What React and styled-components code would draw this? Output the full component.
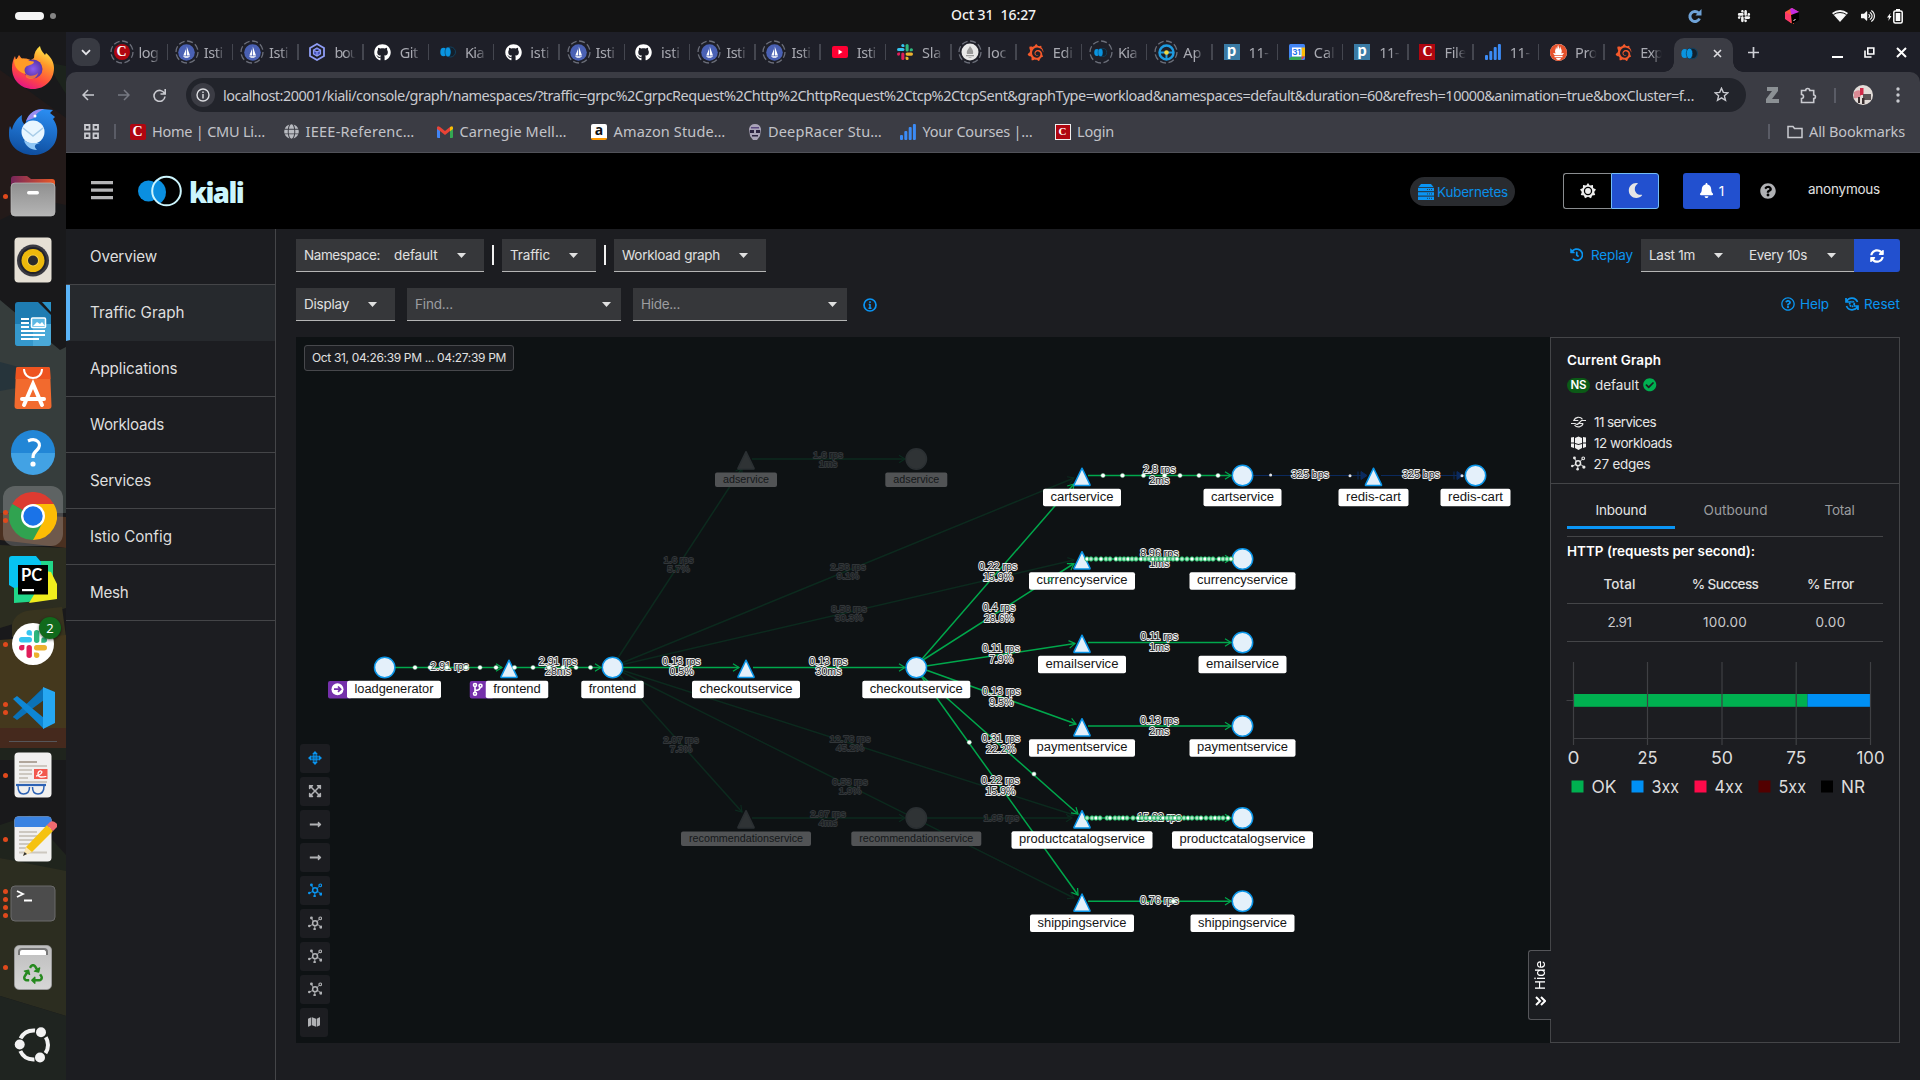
import React, { useLayoutEffect, useRef, useState } from "react";
import styled, { createGlobalStyle } from "styled-components";
import {
  FaGithub, FaSlack, FaBell, FaMoon, FaQuestionCircle, FaRegQuestionCircle, FaHistory,
  FaSyncAlt, FaCheckCircle, FaMap, FaLongArrowAltRight, FaExpandArrowsAlt,
  FaRecycle, FaVolumeUp, FaGlobe,
} from "react-icons/fa";
import { SiGrafana, SiPrometheus } from "react-icons/si";

const UI = `Inter, "Open Sans", sans-serif`;
const CHROME = `"Noto Sans", "Open Sans", sans-serif`;
const line = "#444548";

const Global = createGlobalStyle`
  * { box-sizing: border-box; }
  body { margin: 0; background: #1b1d21; overflow: hidden; }
  svg { display: block; flex: none; }
`;

/* Text tracked to a fixed measure */
const Measure = styled.span`
  display: inline-block;
  white-space: pre;
  flex: none;
`;
function T({ w, children, ...rest }) {
  const ref = useRef(null);
  const [ls, setLs] = useState(0);
  useLayoutEffect(() => {
    const natural = ref.current.getBoundingClientRect().width;
    setLs((w - natural) / children.length);
  }, []);
  return <Measure ref={ref} style={{ letterSpacing: `${ls}px` }} {...rest}>{children}</Measure>;
}

const Desktop = styled.div`
  width: 1920px;
  height: 1080px;
  display: grid;
  grid-template-rows: 32px 1fr;
  grid-template-columns: minmax(0, 1fr);
  background: #1b1d21;
`;
const TopBar = styled.div`
  display: grid;
  grid-template-columns: 951px 1fr auto;
  align-items: center;
  background: #131313;
  color: #f2f2f2;
  font: 500 14px/20px ${CHROME};
`;
const Pills = styled.div`
  display: flex;
  align-items: center;
  gap: 6px;
  padding-left: 15px;
`;
const Pill = styled.i`
  width: ${(p) => p.$w}px;
  height: ${(p) => p.$h}px;
  border-radius: 5px;
  background: ${(p) => p.$c};
`;
const Clock = styled.div`padding-bottom: 2px;`;
const Tray = styled.div`
  display: flex;
  align-items: center;
  width: 234px;
`;
const TrayIcon = styled.span`
  width: ${(p) => p.$w}px;
  display: flex;
  justify-content: center;
`;
const Main = styled.div`
  display: grid;
  grid-template-columns: 66px minmax(0, 1fr);
  height: 1048px;
`;

/* ---------- dock ---------- */
const DockBox = styled.div`
  position: relative;
  height: 1048px;
  overflow: hidden;
`;
const Wallpaper = styled.svg`
  position: absolute;
  inset: 0;
`;
const DockList = styled.div`
  position: relative;
  display: flex;
  flex-direction: column;
  height: 1048px;
  padding: 4px 0 3px;
`;
const DockItem = styled.div`
  position: relative;
  height: 64px;
  display: flex;
  align-items: center;
  justify-content: center;
  margin-top: ${(p) => (p.$last ? "auto" : 0)};
`;
const DockActive = styled.div`
  width: 60px;
  height: 60px;
  border-radius: 12px;
  display: grid;
  place-items: center;
  background: rgba(255, 255, 255, 0.2);
`;
const Dots = styled.div`
  position: absolute;
  left: 3px;
  top: 0;
  bottom: 0;
  display: flex;
  flex-direction: column;
  justify-content: center;
  gap: 3px;
`;
const Dot = styled.i`
  width: 5px;
  height: 5px;
  border-radius: 50%;
  background: #e0491c;
`;
const DockRule = styled.div`
  height: 1px;
  margin: 1px 9px 1px;
  background: #56565a;
`;
const Badge = styled.b`
  position: absolute;
  left: 39px;
  top: 5px;
  width: 22px;
  height: 22px;
  border-radius: 50%;
  background: #116a1c;
  color: #fff;
  font: 400 13px/22px ${CHROME};
  text-align: center;
  box-shadow: 0 1px 3px #0009;
`;

const Firefox = () => (
  <svg width="44" height="44" viewBox="0 0 44 44">
    <defs>
      <linearGradient id="ff1" x1="0.8" y1="0" x2="0.3" y2="1"><stop offset="0" stopColor="#fff44f" /><stop offset=".35" stopColor="#ff9a2a" /><stop offset=".7" stopColor="#ff4a3f" /><stop offset="1" stopColor="#e3128a" /></linearGradient>
      <radialGradient id="ff2"><stop offset="0" stopColor="#8a5cf0" /><stop offset="1" stopColor="#5b34a8" /></radialGradient>
    </defs>
    <path d="M22 43C10 43 1 34 1 22c0-5 1-8 3-12l1 4 3-5 3 4c3-1 6 0 9 1l3-2c0-5 2-9 6-12 1 5 3 6 5 9l1-2c5 4 8 9 8 15 0 12-9 21-21 21z" fill="url(#ff1)" />
    <circle cx="22" cy="23" r="9.5" fill="url(#ff2)" />
    <path d="M3 14c5-3 11-2 15 1 0 0 5 0 5 1-1 3-5 3-7 4-3 2-3 5-1 8-6-1-12-6-12-14z" fill="#ff9b26" />
    <path d="M15 28c4 3 9 2 12-1-1 6-8 8-12 4z" fill="#ff7a30" opacity=".8" />
  </svg>
);
const Thunderbird = () => (
  <svg width="50" height="48" viewBox="0 0 50 48">
    <defs><linearGradient id="tb" x1=".6" y1="0" x2=".4" y2="1"><stop offset="0" stopColor="#2a8cf0" /><stop offset="1" stopColor="#0e4d9e" /></linearGradient></defs>
    <path d="M25 47C12 47 1 38 1 27c0-4 0-7 1-9l2 4c1-6 5-12 10-15-1 5 1 8 3 10C19 7 25 1 35 1l10 1-3 3 5 4-2 2c3 4 5 9 4 16-1 12-11 20-24 20z" fill="url(#tb)" />
    <path d="M18 13c3-8 9-12 18-12-5 2-8 5-10 9z" fill="#9a8cf0" />
    <circle cx="25" cy="24" r="11.500" fill="#e9f6ff" />
    <path d="M15 20l10 8 10-8" fill="none" stroke="#a9cde8" strokeWidth="1.600" />
    <path d="M16 32c4 4 10 3 16 3-5 1-7 3-3 7-6 0-12-4-13-10z" fill="#8fc6f5" />
    <circle cx="27" cy="8" r="1.500" fill="#fff" />
  </svg>
);
const Files = () => (
  <svg width="46" height="42" viewBox="0 0 46 42">
    <defs><linearGradient id="fi1"><stop offset="0" stopColor="#77265a" /><stop offset="1" stopColor="#ea5a26" /></linearGradient><linearGradient id="fi2" x2="0" y2="1"><stop offset="0" stopColor="#8f8f8f" /><stop offset="1" stopColor="#b5b5b5" /></linearGradient></defs>
    <path d="M1 30V4q0-3 3-3h13l4 3h21q3 0 3 3v20z" fill="url(#fi1)" />
    <rect x="1" y="8" width="44" height="33" rx="4" fill="url(#fi2)" stroke="#bbb" strokeWidth=".7" />
    <rect x="17" y="16" width="12" height="3.4" rx="1.7" fill="#fff" />
  </svg>
);
const Rhythmbox = () => (
  <svg width="38" height="46" viewBox="0 0 38 46">
    <rect x=".5" y=".5" width="37" height="45" rx="4" fill="#e6e0d5" />
    <circle cx="19" cy="23.500" r="16" fill="#3a3a42" /><circle cx="19" cy="23.500" r="13.500" fill="#23232a" />
    <circle cx="19" cy="23.500" r="11.500" fill="#edb90c" /><circle cx="19" cy="23.500" r="6" fill="#f6cf3e" /><circle cx="19" cy="23.500" r="5" fill="#2b2b2b" />
  </svg>
);
const Writer = () => (
  <svg width="38" height="46" viewBox="0 0 38 46">
    <path d="M4 1h20l13 13v28q0 3-3 3H4q-3 0-3-3V4q0-3 3-3z" fill="#1e7cb2" />
    <path d="M1 23h18v22H4q-3 0-3-3z" fill="#3598cc" /><path d="M19 23h18v19q0 3-3 3H19z" fill="#4aa9d8" />
    <path d="M28 1h9v10z" fill="#2a93c9" />
    <path d="M7 18h8M7 22h8M7 26h8M7 30h24M7 34h24M7 38h18" stroke="#fff" strokeWidth="2" />
    <rect x="17.500" y="17" width="14" height="9.500" rx="1" fill="#5db8e4" stroke="#fff" strokeWidth="1.500" /><path d="M19 25l4-4 3 2 2-2 3 4z" fill="#fff" />
  </svg>
);
const Software = () => (
  <svg width="38" height="44" viewBox="0 0 38 44">
    <path d="M4 1h30q2 0 2 2l1.500 37q0 3-3 3h-31q-3 0-3-3L2 3q0-2 2-2z" fill="#f26a2e" /><path d="M4 1h30q2 0 2 2l.5 10h-35L2 3q0-2 2-2z" fill="#ee5420" />
    <path d="M10 3c0 12 18 12 18 0" fill="none" stroke="#fff" strokeWidth="2" />
    <path d="M10 39l9-21 9 21M8 33h22" fill="none" stroke="#fff" strokeWidth="4" strokeLinecap="round" />
  </svg>
);
const Help = () => (
  <svg width="46" height="46" viewBox="0 0 46 46">
    <circle cx="23" cy="23" r="22" fill="#2286d6" /><path d="M1 24h44a22 22 0 0 1-44 0z" fill="#42a2e4" />
    <path d="M18 12c9-4 15 3 9 9-3 3-4 4-4 8" fill="none" stroke="#fff" strokeWidth="3.200" /><circle cx="23" cy="35" r="2.600" fill="#fff" />
  </svg>
);
const Chrome = () => (
  <svg width="48" height="48" viewBox="0 0 48 48">
    <path d="M24 24L3.200 12A24 24 0 0 1 44.800 12z" fill="#dd3b30" /><path d="M24 24l20.800-12A24 24 0 0 1 24 48z" fill="#fcbc05" />
    <path d="M24 24l-20.800-12A24 24 0 0 0 24 48l10-18z" fill="#30a350" /><path d="M24 12h20.800l-10.400 18z" fill="#fcbc05" />
    <circle cx="24" cy="24" r="12" fill="#fff" /><circle cx="24" cy="24" r="9.700" fill="#1a73e8" />
  </svg>
);
const DockText = styled.text`
  font: 700 16.5px Lato, sans-serif;
`;
const PyCharm = () => (
  <svg width="48" height="48" viewBox="0 0 48 48">
    <path d="M5 32V47l26-2 13-12V5H24z" fill="#21d789" /><path d="M0 3q0-3 3-3h24l5 6v20L5 32l-5-3z" fill="#07c3f2" />
    <path d="M32 14l10 2 6 12v15L20 47l12-20z" fill="#f1ed1d" />
    <rect x="9" y="9" width="30" height="29.500" />
    <DockText x="12" y="24.500" fill="#fff">PC</DockText>
    <rect x="13" y="33" width="12" height="2.200" fill="#fff" />
  </svg>
);
const SlackMark = ({ size }) => (
  <svg width={size} height={size} viewBox="0 0 28 28">
    <g fill="#36c5f0"><rect x="0" y="7" width="13" height="5.400" rx="2.700" /><path d="M7.500 2.700a2.700 2.700 0 0 1 5.400 0v2.700h-2.700a2.700 2.700 0 0 1-2.700-2.700z" /></g>
    <g fill="#2eb67d"><rect x="15" y="0" width="5.400" height="13" rx="2.700" /><path d="M25.300 7.300a2.700 2.700 0 0 1 0 5.400h-3V10a2.700 2.700 0 0 1 3-2.700z" /></g>
    <g fill="#ecb22e"><rect x="15" y="15" width="13" height="5.400" rx="2.700" /><path d="M15 22.500h2.700a2.700 2.700 0 1 1-2.700 2.700z" /></g>
    <g fill="#e01e5a"><rect x="7.500" y="15" width="5.400" height="13" rx="2.700" /><path d="M2.700 15h2.700v2.700A2.700 2.700 0 1 1 2.700 15z" /></g>
  </svg>
);
const SlackDisc = styled.div`
  width: 42px;
  height: 42px;
  border-radius: 50%;
  background: #fff;
  display: grid;
  place-items: center;
`;
const VSCode = () => (
  <svg width="43" height="42" viewBox="0 0 43 42">
    <path d="M1 30l30-29v10L5 32z" fill="#0a6cb0" /><path d="M1 30l4 3 27-20V1z" fill="#0b72b8" /><path d="M1 12l4-3 27 22v11z" fill="#0e86d4" /><path d="M31 0l12 5v31l-12 6z" fill="#26a7f2" />
  </svg>
);
const Reader = () => (
  <svg width="38" height="46" viewBox="0 0 38 46">
    <rect x=".5" y=".5" width="37" height="45" rx="4" fill="#f1f0ef" />
    <path d="M5 10h18" stroke="#b1a79c" strokeWidth="2" /><path d="M5 14h28M5 18h13M5 22h13M5 26h9M5 30h28" stroke="#cdc8c0" strokeWidth="2" />
    <rect x="20" y="17" width="13.500" height="10" fill="#f2584e" /><path d="M22 24c3 0 8-4 5-5s-5 6 0 6 5-1 5-1" stroke="#fff" fill="none" strokeWidth="1.300" />
    <path d="M2 33h30" fill="none" stroke="#2d62b4" strokeWidth="2.200" /><path d="M4 34c0 6 2 8 5.500 8s6-2 6-7M18.500 35c0 5 2 7 5.500 7s6-2 6-8" fill="none" stroke="#2d62b4" strokeWidth="1.500" />
  </svg>
);
const Editor = () => (
  <svg width="48" height="46" viewBox="0 0 48 46">
    <rect x="5.500" y=".5" width="37" height="45" rx="4" fill="#f1f0ef" /><path d="M5.500 11V4.500q0-4 4-4h29q4 0 4 4V11z" fill="#3a83e2" />
    <path d="M10 16h18M10 20h20M10 24h16M10 28h14M10 32h8M10 36.500h28" stroke="#cdc8c0" strokeWidth="1.800" />
    <path d="M15 39l2-8L38 9l6 6-21 21z" fill="#f5c211" /><path d="M38 9l3-3q3-2 6 1t0 5l-3 3z" fill="#f06a70" /><path d="M14 40l3-9 6 5z" fill="#fbe6b4" /><path d="M14 40l1.500-4 2.500 2z" fill="#333" />
  </svg>
);
const Terminal = () => (
  <svg width="46" height="37" viewBox="0 0 46 37">
    <rect x="1" y="1" width="44" height="35" rx="4" fill="#4c4c4c" stroke="#6a6a6a" />
    <path d="M7 6l6 3-6 3M14 15.500h8" fill="none" stroke="#fff" strokeWidth="1.800" />
  </svg>
);
const TrashBox = styled.div`
  width: 38px;
  height: 45px;
  border-radius: 5px;
  background: linear-gradient(#bdbdbd, #d6d6d6);
  border: 1px solid #999;
  display: flex;
  flex-direction: column;
  align-items: center;
  gap: 9px;
  color: #26891f;
`;
const Paper = styled.i`
  width: 30px;
  height: 7px;
  margin-top: 2px;
  border: 2px solid #777;
  border-bottom: 0;
  border-radius: 4px 4px 0 0;
  background: #fff;
`;
const Ubuntu = () => (
  <svg width="38" height="38" viewBox="0 0 38 38">
    <circle cx="19.500" cy="19" r="14.500" fill="none" stroke="#f2f2f2" strokeWidth="4" strokeDasharray="17.400 12.970" strokeDashoffset="8.700" />
    <g fill="#f2f2f2"><circle cx="5.700" cy="18.500" r="5" /><circle cx="27" cy="6.300" r="5" /><circle cx="26" cy="31.500" r="5" /></g>
  </svg>
);

const dock = [
  [<Firefox />, 0], [<Thunderbird />, 0], [<Files />, 1], [<Rhythmbox />, 0], [<Writer />, 0], [<Software />, 0], [<Help />, 0],
  [<DockActive><Chrome /></DockActive>, 2], [<PyCharm />, 0],
  [<><SlackDisc><SlackMark size={28} /></SlackDisc><Badge>2</Badge></>, 1], [<VSCode />, 2],
];
const dock2 = [[<Reader />, 1], [<Editor />, 1], [<Terminal />, 4], [<TrashBox><Paper /><FaRecycle size={20} /></TrashBox>, 1]];

const DockEntry = ({ item }) => (
  <DockItem>
    <Dots>{Array.from({ length: item[1] }, (_, i) => <Dot key={i} />)}</Dots>
    {item[0]}
  </DockItem>
);

function Dock() {
  return (
    <DockBox>
      <Wallpaper width="66" height="1048" viewBox="0 32 66 1048">
        <rect y="32" width="66" height="1048" fill="#19191b" />
        <path d="M0 70L66 118V205L40 200 0 220z" fill="#231a19" /><path d="M46 62l20 4v28z" fill="#1c231c" />
        <path d="M0 300L60 350l6-3V513H0z" fill="#363d3c" /><path d="M0 362l30 8-14 18-16 3z" fill="#26343b" />
        <path d="M0 513l66 4v31L0 540z" fill="#4a3020" /><path d="M0 545l66 3v60L0 628z" fill="#2c2d20" />
        <path d="M12 625q3-14 22-15l28-3 4 30H12z" fill="#38341f" /><path d="M0 640l66-5v93H0z" fill="#44381d" />
        <path d="M0 728h66v20H0z" fill="#45291d" /><path d="M0 748h66v12H0z" fill="#1f241d" />
        <path d="M0 825l30-10 36 40v20L0 858z" fill="#1f241d" /><path d="M0 858l66 13v145L0 996z" fill="#2c2d20" />
        <path d="M0 996l66 20v64H0z" fill="#1f2420" />
      </Wallpaper>
      <DockList>
        {dock.map((d, i) => <DockEntry item={d} key={i} />)}
        <DockRule />
        {dock2.map((d, i) => <DockEntry item={d} key={i} />)}
        <DockItem $last><Ubuntu /></DockItem>
      </DockList>
    </DockBox>
  );
}

/* ---------- browser chrome ---------- */
const Browser = styled.div`
  display: flex;
  flex-direction: column;
  min-width: 0;
  background: #1c1d21;
`;
const TabStrip = styled.div`
  height: 40px;
  flex: none;
  display: flex;
  align-items: center;
  background: #1e1f28;
  color: #a9aab2;
  font: 400 14.5px/22px ${CHROME};
`;
const TabSearch = styled.div`
  width: 28px;
  height: 28px;
  margin: 0 4px 0 6px;
  border-radius: 9px;
  background: #383a42;
  display: grid;
  place-items: center;
  flex: none;
`;
const Tab = styled.div`
  width: 65.3px;
  height: 40px;
  display: flex;
  align-items: center;
  gap: 5px;
  padding-left: 5.5px;
  flex: none;
`;
const TabSep = styled.i`
  width: 1.5px;
  height: 16px;
  background: #44464f;
`;
const Fav = styled.span`
  width: 24px;
  height: 24px;
  display: grid;
  place-items: center;
  flex: none;
  & > * { grid-area: 1 / 1; }
`;
const TabTitle = styled.span`
  width: 23px;
  flex: none;
  padding-bottom: 1px;
  -webkit-mask-image: linear-gradient(90deg, #000 50%, transparent 95%);
  mask-image: linear-gradient(90deg, #000 50%, transparent 95%);
`;
const ActiveTab = styled.div`
  position: relative;
  width: 59px;
  height: 34px;
  margin: 6px 0 0 3px;
  border-radius: 10px 10px 0 0;
  background: #3b3c44;
  display: flex;
  align-items: center;
  gap: 15px;
  padding: 0 0 4px 7px;
  flex: none;
  &::before, &::after {
    content: "";
    position: absolute;
    bottom: 0;
    width: 10px;
    height: 10px;
    background: radial-gradient(circle at 0 0, transparent 9.5px, #3b3c44 10px);
    left: -10px;
  }
  &::after { left: 59px; background: radial-gradient(circle at 100% 0, transparent 9.5px, #3b3c44 10px); }
`;
const WinButtons = styled.div`
  display: flex;
  align-items: center;
  gap: 21px;
  padding-right: 13px;
`;
const Serif = styled.span`
  width: ${(p) => p.$s}px;
  height: ${(p) => p.$s}px;
  border-radius: ${(p) => p.$r || 0};
  background: #b00610;
  border: ${(p) => p.$b || 0}px solid #eee;
  color: #fff;
  font: 700 ${(p) => p.$s - 2 - 2 * (p.$b || 0)}px/${(p) => p.$s - 2 * (p.$b || 0)}px "Liberation Serif", serif;
  text-align: center;
`;
const Ring = () => (
  <svg width="24" height="24" viewBox="0 0 24 24"><circle cx="12" cy="12" r="11" fill="none" stroke="#6c6f7a" strokeWidth="1.300" strokeDasharray="6 2.600" /></svg>
);
const Sail = () => (
  <svg width="17" height="17" viewBox="0 0 17 17"><circle cx="8.500" cy="8.500" r="8.300" fill="#4a61b4" /><path d="M8.800 2.500l3.200 9H8.800zM8 5v6.500H5.300z M4.800 12.300h7.600l-2.500 1.500H7z" fill="#fff" /></svg>
);
const Hex = () => (
  <svg width="16" height="18" viewBox="0 0 16 18" fill="none" stroke="#8f9df5" strokeWidth="1.800"><path d="M8 1l7 4v8l-7 4-7-4V5z" /><path d="M8 5l3.500 2v4L8 13l-3.500-2V7zM4.500 7L8 9l3.500-2M8 9v4" fill="#4450b8" strokeWidth="1.200" /></svg>
);
const KialiFav = ({ s = 16 }) => (
  <svg width={s} height={s} viewBox="0 0 16 16"><circle cx="10.500" cy="8" r="5" fill="#13202c" stroke="#12425f" /><ellipse cx="3.500" cy="8" rx="3.200" ry="4.300" fill="#0a94e0" /><ellipse cx="8" cy="8" rx="3" ry="5" fill="#0a94e0" stroke="#123" strokeWidth=".5" /></svg>
);
const YT = () => (
  <svg width="16" height="12" viewBox="0 0 16 12"><rect width="16" height="12" rx="2" fill="#ff0033" /><path d="M6.500 3.500v5l4-2.500z" fill="#fff" /></svg>
);
const Piazza = styled.span`
  width: 16px;
  height: 16px;
  background: #3a7ba5;
  color: #fff;
  font: 900 16px/12px Lato, sans-serif;
  text-align: center;
`;
const Bars = () => (
  <svg width="16" height="16" viewBox="0 0 16 16" fill="#3b8bf5"><rect y="11" width="3" height="5" rx="1" /><rect x="4.300" y="7" width="3" height="9" rx="1" /><rect x="8.700" y="3" width="3" height="13" rx="1" /><rect x="12.900" y="0" width="3" height="16" rx="1" /></svg>
);
const CalText = styled.text`font: 700 8px Inter, sans-serif;`;
const Calendar = () => (
  <svg width="16" height="16" viewBox="0 0 16 16"><rect width="16" height="16" rx="1.500" fill="#4285f4" /><rect x="12.500" y="3.500" width="3.500" height="9" fill="#fbbc04" /><path d="M3.500 12.500h9V16H2q-2 0-2-2z" fill="#34a853" /><path d="M12.500 12.500H16L12.500 16z" fill="#ea4335" /><rect x="3" y="3.500" width="9.500" height="9" fill="#fff" /><CalText x="3.200" y="11" fill="#1a73e8">31</CalText></svg>
);
const LocFav = () => (
  <svg width="18" height="18" viewBox="0 0 18 18"><circle cx="9" cy="9" r="8.500" fill="#e8e8e8" /><path d="M9 3c1 2 4 4 3 8H6C5 7 8 6 9 3zM5 12h8v1.300H5zM7 14.200h4q-2 1.500-4 0z" fill="#999" /></svg>
);
const Argo = () => (
  <svg width="17" height="17" viewBox="0 0 17 17"><circle cx="8.500" cy="8.500" r="7" fill="none" stroke="#1e9be0" strokeWidth="2.500" /><path d="M2 8.500h13M8.500 9v6" stroke="#1e9be0" strokeWidth="2" /><circle cx="8.500" cy="8.500" r="2.300" fill="#f2d640" /></svg>
);
const PromDisc = styled.span`
  width: 17px;
  height: 17px;
  border-radius: 50%;
  background: #fff;
  display: grid;
  place-items: center;
`;
const Cmu = () => <Serif $s={16} $r="50%">C</Serif>;

const fav = {
  cmuR: <><Ring /><Cmu /></>, istio: <><Ring /><Sail /></>, hex: <Hex />, gh: <FaGithub size={17} color="#fff" />, kiali: <KialiFav />, yt: <YT />,
  slack: <SlackMark size={16} />, loc: <><Ring /><LocFav /></>, graf: <SiGrafana size={17} color="#f4592b" />, kialiR: <><Ring /><KialiFav s={13} /></>,
  argo: <><Ring /><Argo /></>, p: <Piazza>p</Piazza>, cal: <Calendar />, cmu: <Serif $s={16}>C</Serif>, bars: <Bars />,
  prom: <PromDisc><SiPrometheus size={17} color="#e6522c" /></PromDisc>,
};
const tabs = [
  ["cmuR", "log", 20], ["istio", "Isti", 19], ["istio", "Isti", 19], ["hex", "bou", 23], ["gh", "Git", 18], ["kiali", "Kia", 19], ["gh", "isti", 19], ["istio", "Isti", 19],
  ["gh", "isti", 19], ["istio", "Isti", 19], ["istio", "Isti", 19], ["yt", "Isti", 19], ["slack", "Sla", 19], ["loc", "loc", 19], ["graf", "Edi", 20], ["kialiR", "Kia", 19], ["argo", "Ap", 18],
  ["p", "11-", 20], ["cal", "Cal", 21], ["p", "11-", 20], ["cmu", "File", 22], ["bars", "11-", 20], ["prom", "Pro", 22], ["graf", "Exp", 22],
];

const Toolbar = styled.div`
  height: 46px;
  flex: none;
  display: flex;
  align-items: center;
  background: #3b3c44;
  border-radius: 10px 10px 0 0;
  color: #c9cad0;
  font: 400 14.5px/20px ${CHROME};
`;
const ToolWrap = styled.div`background: #1e1f28;`;
const IconSlot = styled.span`
  width: ${(p) => p.$w}px;
  display: flex;
  justify-content: center;
  flex: none;
`;
const Omni = styled.div`
  width: 1560px;
  height: 34px;
  margin-left: 6px;
  border-radius: 17px;
  background: #22242b;
  display: flex;
  align-items: center;
  padding: 0 0 1px 5px;
`;
const InfoDisc = styled.span`
  width: 24px;
  height: 24px;
  margin: 1px 8px 0 0;
  border-radius: 50%;
  background: #3b3c44;
  display: grid;
  place-items: center;
  flex: none;
`;
const Bookmarks = styled.div`
  height: 35px;
  flex: none;
  display: flex;
  align-items: center;
  padding: 0 15px 7px 18px;
  background: #3b3c44;
  border-bottom: 1px solid #515259;
  color: #c2c3c9;
  font: 400 14.5px/20px ${CHROME};
`;
const VSep = styled.i`
  width: 1.5px;
  height: 15px;
  margin: ${(p) => p.$m};
  background: #5a5c66;
`;
const Bookmark = styled.div`
  display: flex;
  align-items: center;
  gap: 6.5px;
  margin-right: ${(p) => p.$mr}px;
  & > span:last-child { margin-top: -1px; }
`;
const Spacer = styled.div`flex: 1;`;
const AmazonIcon = styled.span`
  width: 16px;
  height: 16px;
  border-radius: 2px;
  background: #fff;
  color: #111;
  font: 700 14px/11px "Open Sans", sans-serif;
  text-align: center;
  border-bottom: 2px solid #f90;
`;
const Gmail = () => (
  <svg width="16" height="16" viewBox="0 0 16 16"><path d="M0 3l3 2v9H1q-1 0-1-1z" fill="#4285f4" /><path d="M16 3l-3 2v9h2q1 0 1-1z" fill="#34a853" /><path d="M0 4q0-3 3-1l5 4 5-4v4l-5 4-5-4-3-2z" fill="#ea4335" /><path d="M13 3q3-2 3 1v1l-3 2.200z" fill="#fbbc04" /></svg>
);
const Racer = () => (
  <svg width="14" height="16" viewBox="0 0 14 16"><path d="M1 5q1-5 6-5t6 5l-1 7-3 4H5l-3-4z" fill="#a9a3b8" /><path d="M2 6h4v3H2zM8 6h4v3H8zM4 11h6v1.500H4z" fill="#2b2340" /><path d="M3 3h8v1.500H3z" fill="#5c4a80" /></svg>
);
const Avatar = () => (
  <svg width="20" height="20" viewBox="0 0 20 20"><circle cx="10" cy="10" r="10" fill="#e2dcd8" /><path d="M1 7q4-3 7-1v5q-4 3-7 2z" fill="#d98a94" /><path d="M7 3h3.500v7H7z" fill="#d02a48" /><path d="M10 9h8v6h-8z" fill="#5a5456" /><path d="M5 12h2v6H5zM9 13h2.500v6H9z" fill="#3a2f30" /></svg>
);

function Chromium() {
  return (
    <>
      <TabStrip>
        <TabSearch><svg width="10" height="7" viewBox="0 0 10 7"><path d="M1 1.200l4 4 4-4" fill="none" stroke="#e6e6ea" strokeWidth="1.800" /></svg></TabSearch>
        {tabs.map(([f, t, w], i) => (
          <Tab key={i}>
            <Fav>{fav[f]}</Fav>
            <TabTitle><T w={w}>{t}</T></TabTitle>
            {i < tabs.length - 1 && <TabSep />}
          </Tab>
        ))}
        <ActiveTab>
          <KialiFav s={17} />
          <IconSlot $w={9}><svg width="9" height="9" viewBox="0 0 9 9"><path d="M1 1l7 7M8 1L1 8" stroke="#dcdce0" strokeWidth="1.600" /></svg></IconSlot>
        </ActiveTab>
        <IconSlot $w={40}><svg width="11" height="11" viewBox="0 0 11 11"><path d="M5.500 0v11M0 5.500h11" stroke="#cfd0d6" strokeWidth="1.700" /></svg></IconSlot>
        <Spacer />
        <WinButtons>
          <svg width="11" height="11" viewBox="0 0 11 11"><path d="M0 10h11" stroke="#fff" strokeWidth="2" /></svg>
          <svg width="11" height="11" viewBox="0 0 11 11" fill="none" stroke="#fff" strokeWidth="1.600"><path d="M3.800 1h6v6h-6z" /><path d="M1 3.500V10h6.500" /></svg>
          <svg width="11" height="11" viewBox="0 0 11 11"><path d="M1 1l9 9M10 1l-9 9" stroke="#fff" strokeWidth="2" /></svg>
        </WinButtons>
      </TabStrip>
      <ToolWrap>
        <Toolbar>
          <IconSlot $w={44}><svg width="12" height="12" viewBox="0 0 12 12" fill="none" stroke="#c9cad0" strokeWidth="1.500"><path d="M12 6H1M6 1L1 6l5 5" /></svg></IconSlot>
          <IconSlot $w={28}><svg width="12" height="12" viewBox="0 0 12 12" fill="none" stroke="#777982" strokeWidth="1.500"><path d="M0 6h11M6 1l5 5-5 5" /></svg></IconSlot>
          <IconSlot $w={42}><svg width="13" height="13" viewBox="0 0 13 13" fill="none" stroke="#c9cad0" strokeWidth="1.600"><path d="M11.500 4.500a5.500 5.500 0 1 0 .5 3M12.200 0v5H7.500" /></svg></IconSlot>
          <Omni>
            <InfoDisc><svg width="14" height="14" viewBox="0 0 14 14" fill="none" stroke="#dedfe3" strokeWidth="1.400"><circle cx="7" cy="7" r="6" /><path d="M7 6v4.500M7 3.500v1.400" /></svg></InfoDisc>
            <T w={1471}>localhost:20001/kiali/console/graph/namespaces/?traffic=grpc%2CgrpcRequest%2Chttp%2ChttpRequest%2Ctcp%2CtcpSent&graphType=workload&namespaces=default&duration=60&refresh=10000&animation=true&boxCluster=f…</T>
            <IconSlot $w={54}><svg width="15" height="15" viewBox="0 0 15 15"><path d="M7.500 1.200l1.800 4.200 4.600.4-3.500 3 1.100 4.500-4-2.400-4 2.400 1.100-4.500-3.500-3 4.600-.4z" fill="none" stroke="#c9cad0" strokeWidth="1.400" /></svg></IconSlot>
          </Omni>
          <IconSlot $w={52}><svg width="13" height="16" viewBox="0 0 13 16"><path d="M1 0h11v4L6 12h7v4H0v-4l6-8H1z" fill="#8b9094" /></svg></IconSlot>
          <IconSlot $w={21}><svg width="17" height="17" viewBox="0 0 17 17" fill="none" stroke="#c9cad0" strokeWidth="1.600"><path d="M1.500 3.500h4.200a2 2 0 0 1 4 0h4V8a1.500 1.500 0 0 1 0 3.500v4H1.500v-4a2 2 0 0 0 0-4z" /></svg></IconSlot>
          <VSep $m="0 17px 0 15px" />
          <Avatar />
          <Spacer />
          <IconSlot $w={44}><svg width="4" height="16" viewBox="0 0 4 16" fill="#c9cad0"><circle cx="2" cy="2" r="1.700" /><circle cx="2" cy="8" r="1.700" /><circle cx="2" cy="14" r="1.700" /></svg></IconSlot>
        </Toolbar>
      </ToolWrap>
      <Bookmarks>
        <svg width="15" height="15" viewBox="0 0 15 15" fill="none" stroke="#c9cad0" strokeWidth="1.800"><path d="M1 1h4.500v4.500H1zM9.500 1H14v4.500H9.500zM1 9.500h4.500V14H1zM9.500 9.500H14V14H9.500z" /></svg>
        <VSep $m="0 14px 0 15px" />
        <Bookmark $mr={19}><Serif $s={16} $r="2px">C</Serif><T w={113}>Home | CMU Li…</T></Bookmark>
        <Bookmark $mr={22.5}><FaGlobe size={15} color="#b9bbc1" /><T w={109}>IEEE-Referenc…</T></Bookmark>
        <Bookmark $mr={24.500}><Gmail /><T w={107}>Carnegie Mell…</T></Bookmark>
        <Bookmark $mr={22}><AmazonIcon>a</AmazonIcon><T w={112}>Amazon Stude…</T></Bookmark>
        <Bookmark $mr={18}><Racer /><T w={114}>DeepRacer Stu…</T></Bookmark>
        <Bookmark $mr={22}><Bars /><T w={110}>Your Courses |…</T></Bookmark>
        <Bookmark $mr={0}><Serif $s={16} $b={1.5}>C</Serif><T w={37}>Login</T></Bookmark>
        <Spacer />
        <VSep $m="0 17px 0 0" />
        <svg width="16" height="14" viewBox="0 0 16 14" fill="none" stroke="#c9cad0" strokeWidth="1.500"><path d="M1 1.500h5l1.500 2H15v9H1z" /></svg>
        <Bookmark $mr={0}><i /><T w={96}>All Bookmarks</T></Bookmark>
      </Bookmarks>
    </>
  );
}

/* ---------- kiali ---------- */
const Header = styled.div`
  height: 76px;
  flex: none;
  display: flex;
  align-items: center;
  padding: 0 40px 0 25px;
  background: #000;
  color: #e0e0e0;
  font: 400 13.5px/20px ${UI};
`;
const Wordmark = styled.span`
  margin: 3px 0 0 7px;
  color: #ccf5fd;
  font: 800 27.5px/30px "Open Sans", sans-serif;
`;
const ClusterPill = styled.span`
  height: 29px;
  width: 105px;
  margin: 1px 48px 0 0;
  display: flex;
  align-items: center;
  gap: 3px;
  padding-left: 8px;
  border-radius: 15px;
  background: #292b2f;
  color: #0a8fe8;
`;
const Toggle = styled.span`
  width: 48px;
  height: 36px;
  margin-top: -1px;
  border: 1px solid ${(p) => (p.$on ? "#73bcf7" : "#8a8d90")};
  border-right-width: ${(p) => (p.$on ? 1 : 0)}px;
  border-radius: ${(p) => (p.$on ? "0 3px 3px 0" : "3px 0 0 3px")};
  background: ${(p) => (p.$on ? "#2250cf" : "#000")};
  display: grid;
  place-items: center;
`;
const Notify = styled.span`
  width: 57px;
  height: 36px;
  margin: -1px 20px 0 24px;
  border-radius: 3px;
  background: #2250cf;
  display: flex;
  align-items: center;
  justify-content: center;
  gap: 5px;
  color: #fff;
`;
const Anon = styled.span`
  margin: -4px 0 0 32px;
`;
const Body = styled.div`
  flex: 1;
  display: grid;
  grid-template-columns: 210px 1fr;
  min-height: 0;
`;
const Nav = styled.nav`
  border-right: 1px solid ${line};
  color: #dedede;
  font: 400 15.2px/20px ${UI};
`;
const NavItem = styled.div`
  height: 56px;
  display: flex;
  align-items: center;
  padding-left: ${(p) => (p.$on ? 20 : 24)}px;
  border-left: ${(p) => (p.$on ? "4px solid #5bb4f8" : "0")};
  border-bottom: 1px solid ${(p) => (p.$on ? "#26292d" : line)};
  background: ${(p) => (p.$on ? "#26292d" : "transparent")};
`;
const Content = styled.div`
  padding: 10px 20px 0;
  color: #e0e0e0;
  font: 400 13.5px/20px ${UI};
`;
const Row = styled.div`
  height: 33px;
  margin-bottom: 16px;
  display: flex;
  align-items: center;
`;
const Select = styled.div`
  width: ${(p) => p.$w}px;
  height: 33px;
  margin-right: ${(p) => p.$mr || 0}px;
  padding: 0 ${(p) => p.$pr || 18}px 0 8px;
  border-bottom: 1px solid #b5b5b5;
  background: #36373a;
  color: ${(p) => (p.$muted ? "#9c9da0" : "#e0e0e0")};
  display: flex;
  align-items: center;
  flex: none;
`;
const CaretSvg = styled.svg`
  margin-left: auto;
  margin-top: 1px;
`;
const Caret = () => <CaretSvg width="9" height="5" viewBox="0 0 9 5"><path d="M0 0h9L4.500 5z" fill="#e0e0e0" /></CaretSvg>;
const Bar = styled.i`
  width: 2px;
  height: 20px;
  margin: -2px 8px 0;
  background: #f0f0f0;
`;
const Link = styled.span`
  display: flex;
  align-items: center;
  gap: ${(p) => p.$g}px;
  margin: -1px ${(p) => p.$mr}px 0 0;
  color: #0a95f0;
`;
const RefreshBtn = styled.span`
  width: 46px;
  height: 33px;
  border-radius: 0 3px 3px 0;
  background: #2250cf;
  display: grid;
  place-items: center;
  flex: none;
`;
const Workspace = styled.div`
  height: 706px;
  display: grid;
  grid-template-columns: 1254px 350px;
`;
const Canvas = styled.div`
  position: relative;
  background: #0e1214;
`;
const GraphSvg = styled.svg`
  position: absolute;
  inset: 0;
`;
const TimeRange = styled.div`
  position: absolute;
  left: 8px;
  top: 8px;
  width: 210px;
  height: 26px;
  padding-left: 7px;
  border: 1px solid #47484c;
  border-radius: 3px;
  background: #1b1d21;
  font: 400 12px/24px ${UI};
`;
const Tools = styled.div`
  position: absolute;
  left: 4px;
  top: 407px;
  display: flex;
  flex-direction: column;
  gap: 4px;
`;
const Tool = styled.span`
  width: ${(p) => p.$w || 30}px;
  height: 29px;
  padding-bottom: 1px;
  border-radius: 3px;
  background: #1c1d21;
  color: ${(p) => (p.$on ? "#0a95f0" : "#b0b1b4")};
  display: grid;
  place-items: center;
`;
const HideTab = styled.div`
  position: absolute;
  right: -1px;
  top: 613px;
  width: 23px;
  height: 70px;
  border: 1px solid #55565a;
  border-right: 0;
  border-radius: 3px 0 0 3px;
  background: #1b1d21;
  display: flex;
  flex-direction: column;
  align-items: center;
  padding-top: 10px;
  gap: 6px;
  color: #fff;
`;
const Vertical = styled.span`
  writing-mode: vertical-rl;
  transform: rotate(180deg);
  font: 400 13.5px/18px ${UI};
  height: 29px;
`;

const Hub = ({ size = 14.5 }) => (
  <svg width={size} height={size} viewBox="0 0 16 16" fill="none" stroke="currentColor" strokeWidth="1.700">
    <circle cx="7.800" cy="8" r="2.700" /><circle cx="13.500" cy="2.600" r="1.500" strokeWidth="1.200" />
    <path d="M10 6l2.500-2.400M5.800 5.700L4.200 3M10.500 9.300l3 2M7.500 11v3M5.200 9.300L2 10.800" strokeWidth="1" />
    <g fill="currentColor" stroke="none"><circle cx="3.800" cy="2.200" r="1.600" /><circle cx="14.200" cy="12.200" r="1.800" /><circle cx="7.300" cy="14.500" r="1.400" /><circle cx="1.400" cy="11" r="1.400" /></g>
  </svg>
);
const Move = () => (
  <svg width="14" height="14" viewBox="0 0 14 14"><path d="M7 0l2.800 3H4.200zM7 14l2.800-3H4.200zM0 7l3-2.800v5.600zM14 7l-3-2.800v5.600z" fill="currentColor" /><path d="M5.300 3v8M8.700 3v8M3 5.300h8M3 8.700h8M7 3v8M3 7h8" fill="none" stroke="currentColor" strokeWidth=".9" /></svg>
);
const Sun = () => (
  <svg width="16" height="16" viewBox="0 0 16 16"><path d="M8 0l1.800 2.600L13 1.900l.1 3.200L16 6.500 14.200 9l1 3-3 .4L11 15.300l-3-1.500-3 1.500-1.200-2.900-3-.4 1-3L0 6.500l2.900-1.400L3 1.900l3.200.7z" fill="#eee" /><circle cx="8" cy="8" r="4.200" fill="#000" /><circle cx="8" cy="8" r="2.900" fill="#eee" /></svg>
);
const ServerIcon = () => (
  <svg width="16" height="16" viewBox="0 0 16 16" fill="#0a95f5"><path d="M3 0h10l2.500 3H.5z" /><rect y="3.800" width="16" height="3.400" /><rect y="8.200" width="16" height="3.400" /><rect y="12.600" width="16" height="3.400" /><path d="M9 5.500h5M9 9.900h5M9 14.300h5" stroke="#292b2f" strokeWidth=".8" strokeDasharray="1 1" /></svg>
);

/* graph data; the svg viewBox starts at 296,337 */
const nodes = [
  ["c", 384.7, 667.5, "loadgenerator", 94, 394], ["t", 509, 667.5, "frontend", 62.5, 517], ["c", 612.5, 667.5, "frontend", 62.5],
  ["t", 746, 667.5, "checkoutservice", 108], ["c", 916.3, 667.5, "checkoutservice", 108],
  ["t", 1082, 475.5, "cartservice", 78], ["c", 1242.5, 475.5, "cartservice", 78], ["t", 1373.5, 475.5, "redis-cart", 70], ["c", 1475.5, 475.5, "redis-cart", 70],
  ["t", 1082, 559, "currencyservice", 106], ["c", 1242.5, 559, "currencyservice", 106],
  ["t", 1082, 642.5, "emailservice", 88], ["c", 1242.5, 642.5, "emailservice", 88],
  ["t", 1082, 726, "paymentservice", 106], ["c", 1242.5, 726, "paymentservice", 106],
  ["t", 1082, 818, "productcatalogservice", 141], ["c", 1242.5, 818, "productcatalogservice", 141],
  ["t", 1082, 901.3, "shippingservice", 104], ["c", 1242.5, 901.3, "shippingservice", 104],
];
const dimNodes = [
  ["t", 746, 459, "adservice", 62], ["c", 916.3, 459, "adservice", 62],
  ["t", 746, 818, "recommendationservice", 130], ["c", 916.3, 818, "recommendationservice", 130],
];
const dimEdges = [
  [612, 667, 742, 468], [612, 667, 1074, 478], [612, 667, 1074, 560], [612, 667, 742, 812], [612, 667, 1074, 815], [612, 667, 1074, 898],
  [752, 459, 905, 459], [752, 818, 905, 818], [927, 818, 1072, 818],
];
const edges = [
  [395, 667.5, 502, 667.5], [516, 667.5, 601, 667.5], [623, 667.5, 739, 667.5], [753, 667.5, 905, 667.5],
  [922, 659, 1074, 484], [923, 660, 1074, 563.5], [926, 666, 1075, 643.5], [926, 670, 1076, 724], [922, 676, 1078, 814], [921, 676, 1078, 895],
  [1088, 475.5, 1231, 475.5], [1088, 559, 1231, 559], [1088, 642.5, 1231, 642.5], [1088, 726, 1231, 726], [1088, 818, 1231, 818], [1088, 901.3, 1231, 901.3],
];
const labels = [
  [449.5, 666.5, "2.91 rps"], [558, 661, "2.91 rps", "28ms"], [681.5, 661, "0.13 rps", "0.5%"], [828.5, 661, "0.13 rps", "30ms"],
  [1159.3, 469.5, "2.8 rps", "2ms"], [1310, 474.3, "325 bps"], [1421, 474.3, "325 bps"], [1159.3, 553, "8.96 rps", "1ms"], [1159.3, 636.3, "0.11 rps", "1ms"],
  [998, 566.3, "0.22 rps", "15.9%"], [999, 607.3, "0.4 rps", "28.6%"], [1001, 648.3, "0.11 rps", "7.9%"], [1001.3, 691.3, "0.13 rps", "9.5%"],
  [1001, 738.3, "0.31 rps", "22.2%"], [1000.5, 780.3, "0.22 rps", "15.9%"], [1159.3, 720.3, "0.13 rps", "2ms"], [1159.3, 817.5, "15.02 rps"], [1159.3, 900.3, "0.76 rps"],
];
const dimLabels = [
  [678.5, 559, "1.6 rps", "5.7%"], [848, 566, "2.56 rps", "9.1%"], [849, 608, "8.56 rps", "30.3%"], [681, 739, "2.07 rps", "7.3%"],
  [850, 738, "12.76 rps", "45.2%"], [850, 781, "0.53 rps", "1.9%"], [828, 813, "2.07 rps", "4ms"], [828, 454, "1.6 rps", "1ms"], [1001.3, 817, "1.95 rps"],
];
const dots = [
  ...[415, 430, 447, 466, 480, 496, 514.5, 533, 549, 563, 576, 590.5].map((x) => [x, 667.5]),
  ...[1103, 1122.5, 1143.5, 1164.5, 1180, 1199, 1218].map((x) => [x, 475.5]),
  [969.3, 742.3], [1034, 774], [1173.500, 901.3],
];
const dense = [
  ...[1087, 1091, 1096, 1101, 1106, 1110, 1116, 1120, 1124, 1128, 1132, 1136, 1141, 1145, 1149, 1153, 1157, 1161, 1165, 1169, 1173, 1177, 1182, 1187, 1192, 1197, 1201, 1205, 1209, 1213, 1219, 1223, 1227, 1231].map((x) => [x, 559]),
  ...[1087, 1092, 1096, 1100, 1107, 1110, 1115, 1119, 1123, 1127, 1133, 1138, 1142, 1146, 1150, 1154, 1158, 1163, 1167, 1171, 1175, 1179, 1184, 1188, 1192, 1197, 1201, 1206, 1211, 1215, 1219, 1223, 1228].map((x) => [x, 818]),
];

const NodeText = styled.text`
  font-family: "Liberation Sans", Arial, sans-serif;
  text-anchor: middle;
`;
const EdgeText = styled.text`
  font: ${(p) => (p.$dim ? 9.8 : 10.6)}px "Liberation Sans", Arial, sans-serif;
  text-anchor: middle;
  fill: ${(p) => (p.$dim ? "#15191b" : "#1a1c1e")};
  stroke: ${(p) => (p.$dim ? "#33373a" : "#efefef")};
  stroke-width: 1.8px;
  stroke-linejoin: round;
  paint-order: stroke;
`;
const Arrow = ({ e, color }) => {
  const [x1, y1, x2, y2] = e;
  const a = (Math.atan2(y2 - y1, x2 - x1) * 180) / Math.PI;
  return <g stroke={color} fill="none" strokeWidth="1.500"><path d={`M${x1} ${y1}L${x2} ${y2}`} /><path d="M-6 -3.800L0 0l-6 3.800" strokeWidth="1.200" transform={`translate(${x2} ${y2}) rotate(${a})`} /></g>;
};
const Shape = ({ kind, x, y, fill, stroke }) =>
  kind === "c" ? <circle cx={x} cy={y} r="10.200" fill={fill} stroke={stroke} strokeWidth="1.500" />
    : <path d={`M${x} ${y - 7.300}l8 16.500q.3 .8-.6 .8h-14.800q-.9 0-.6-.8z`} fill={fill} stroke={stroke} strokeWidth="1.500" strokeLinejoin="round" />;
const ELabel = ({ l, dim }) => (
  <>
    <EdgeText $dim={dim} x={l[0]} y={l[1] + 3.700}>{l[2]}</EdgeText>
    {l[3] && <EdgeText $dim={dim} x={l[0]} y={l[1] + (dim ? 12.5 : 14.4)}>{l[3]}</EdgeText>}
  </>
);

function Graph() {
  return (
    <GraphSvg width="1254" height="706" viewBox="296 337 1254 706">
      {dimEdges.map((e, i) => <Arrow key={i} e={e} color="#0c2a1e" />)}
      {dimNodes.map(([k, x, y, t, w], i) => (
        <g key={i}>
          <Shape kind={k} x={x} y={y} fill="#2f3335" stroke="#2b3033" />
          <rect x={x - w / 2} y={y + 13.500} width={w} height="14.500" rx="2" fill="#515355" />
          <NodeText x={x} y={y + 24} fontSize="11" fill="#15181a" textLength={w - 16} lengthAdjust="spacingAndGlyphs">{t}</NodeText>
        </g>
      ))}
      {dimLabels.map((l, i) => <ELabel key={i} l={l} dim />)}
      {edges.map((e, i) => <Arrow key={i} e={e} color="#00a84c" />)}
      {[[1253, 1367], [1381, 1463]].map(([a, b]) => (
        <g key={a} stroke="#0b2a5e" fill="#0b2a5e"><path d={`M${a} 475.500H${b}`} /><path d={`M${b - 9} 471.500v8M${b - 6} 471.500v8l6-4z`} /></g>
      ))}
      {nodes.map(([k, x, y, t, w, lx], i) => {
        const cx = lx || x;
        return (
          <g key={i}>
            <Shape kind={k} x={x} y={y} fill="#e4f0fa" stroke="#0a95e8" />
            {lx && <rect x={cx - w / 2 - (k === "c" ? 19 : 16)} y={y + 13.500} width="24" height="17.500" rx="2" fill="#7530ab" />}
            <rect x={cx - w / 2} y={y + 13.200} width={w} height="17.500" rx="2" fill="#fff" />
            <NodeText x={cx} y={y + 25.300} fontSize="12.500" fill="#151515" textLength={w - 15} lengthAdjust="spacingAndGlyphs">{t}</NodeText>
          </g>
        );
      })}
      <circle cx="337.500" cy="689.200" r="6" fill="#fff" /><path d="M334 689.200h6M338 686.500l2.700 2.700-2.700 2.700" stroke="#7530ab" strokeWidth="1.700" fill="none" />
      <g fill="#7530ab" stroke="#fff" strokeWidth="1.600"><path d="M475 685v8M475 690.500q5.500 0 5.500-4.500" fill="none" /><circle cx="475" cy="685" r="1.500" /><circle cx="475" cy="693.700" r="1.500" /><circle cx="480.500" cy="685.800" r="1.500" /></g>
      {labels.map((l, i) => <ELabel key={i} l={l} />)}
      {dots.map(([x, y], i) => <circle key={i} cx={x} cy={y} r="2.100" fill="#fff" stroke="#7fd3a5" strokeWidth=".5" />)}
      {dense.map(([x, y], i) => <circle key={i} cx={x} cy={y} r="2.200" fill={i % 3 ? "#b9e8cd" : "#fff"} stroke="#10b35a" strokeWidth=".9" />)}
      {[[1270.600, 475], [1350, 475.700], [1462, 475.700]].map(([x, y]) => <circle key={x} cx={x} cy={y} r="1.500" fill="#dfe3ea" />)}
      <circle cx="1050" cy="579.500" r="2" fill="none" stroke="#10a858" />
    </GraphSvg>
  );
}

const Panel = styled.aside`
  border: 1px solid ${line};
  color: #e6e6e6;
  font: 400 13.5px/20px ${UI};
  display: flex;
  flex-direction: column;
`;
const Summary = styled.div`
  height: 146px;
  padding: 12px 16px 0;
  border-bottom: 1px solid ${line};
`;
const Title = styled.div`
  font-weight: 600;
  color: #fff;
  height: 20px;
`;
const NsRow = styled.div`
  display: flex;
  align-items: center;
  height: 20px;
  margin: 5px 0 16px;
`;
const NsBadge = styled.b`
  width: 23px;
  height: 15px;
  margin-right: 5px;
  border-radius: 8px;
  background: #0b5a16;
  color: #fff;
  font: 600 11.500px/15px ${UI};
  text-align: center;
`;
const Stat = styled.div`
  height: 21px;
  display: flex;
  align-items: center;
  gap: 8px;
  padding-left: 4px;
`;
const Section = styled.div`
  padding: 0 16px;
`;
const PTabs = styled.div`
  height: 53px;
  display: flex;
  border-bottom: 1px solid ${line};
`;
const PTab = styled.span`
  width: ${(p) => p.$w}px;
  height: 45px;
  padding-top: 16px;
  text-align: center;
  color: ${(p) => (p.$on ? "#e6e6e6" : "#9b9c9f")};
  border-bottom: ${(p) => (p.$on ? "3px solid #0a95f5" : "0")};
`;
const HttpTitle = styled.div`
  height: 29px;
  padding-top: 4px;
  font-weight: 600;
  color: #fff;
`;
const TRow = styled.div`
  height: 38px;
  padding-bottom: 1px;
  display: grid;
  grid-template-columns: 105px 106px 105px;
  align-items: center;
  justify-items: center;
  border-bottom: 1px solid ${line};
  font-weight: ${(p) => (p.$head ? 500 : 400)};
  color: ${(p) => (p.$head ? "#e0e0e0" : "#c9c9cb")};
`;
const ChartSvg = styled.svg`
  overflow: visible;
`;
const AxisText = styled.text`
  font: 400 17.5px ${UI};
  fill: #dcdcdc;
  text-anchor: ${(p) => p.$a || "middle"};
`;
const Svc = () => (
  <svg width="15" height="14" viewBox="0 0 15 14" fill="none" stroke="#e6e6e6" strokeWidth="1.200"><path d="M11.500 4.300A5 5 0 0 0 2.800 5.500h4.500M12.200 8.500A5 5 0 0 1 3.500 10M12.200 8.500H7.500" /><path d="M0 8.500h4.500M4.500 8.500q1 2 3 0t3-3H15" /></svg>
);
const Wl = () => (
  <svg width="15" height="14" viewBox="0 0 15 14" fill="#f0f0f0"><path d="M0 1.500L3 1v5.500H0zM0 7.500h3V12l-3-1zM15 1.500L12 1v5.500h3zM15 7.500h-3V12l3-1zM4 2l3.500-1.500L11 2v5l-3.500 1L4 7zM4 8l3.500 1L11 8v4l-3.500 2L4 12z" /></svg>
);

const ticks = [[1573.5, "0", 12], [1647.5, "25", 20], [1722, "50", 22], [1796.200, "75", 20], [1870.500, "100", 28]];
const legend = [[1571, "#00b050", "OK", 25], [1631, "#0090f5", "3xx", 27.500], [1694, "#ff0a4a", "4xx", 28.500], [1758, "#520000", "5xx", 27.500], [1820.500, "#000", "NR", 24]];

function SidePanel() {
  return (
    <Panel>
      <Summary>
        <Title><T w={94}>Current Graph</T></Title>
        <NsRow><NsBadge>NS</NsBadge><T w={44}>default</T><IconSlot $w={22}><FaCheckCircle size={13.500} color="#00b050" /></IconSlot></NsRow>
        <Stat><Svc /><T w={62}>11 services</T></Stat>
        <Stat><Wl /><T w={78}>12 workloads</T></Stat>
        <Stat><Hub /><T w={57}>27 edges</T></Stat>
      </Summary>
      <Section>
        <PTabs>
          <PTab $w={108} $on><T w={51}>Inbound</T></PTab>
          <PTab $w={121}><T w={64}>Outbound</T></PTab>
          <PTab $w={87}><T w={30}>Total</T></PTab>
        </PTabs>
        <HttpTitle><T w={188}>HTTP (requests per second):</T></HttpTitle>
        <TRow $head><T w={32}>Total</T><T w={66.5}>% Success</T><T w={47}>% Error</T></TRow>
        <TRow><T w={24}>2.91</T><T w={44}>100.00</T><T w={30}>0.00</T></TRow>
        <ChartSvg width="316" height="160" viewBox="1567 642 316 160">
          <rect x="1573.500" y="694" width="234" height="12.800" fill="#00b050" /><rect x="1807.500" y="694" width="63" height="12.800" fill="#0090f5" />
          <path d="M1566.500 700.500H1573M1573.500 738.500H1870.500" stroke="#3f4044" fill="none" />
          {ticks.map(([x, t, w]) => (
            <g key={t}>
              <path d={`M${x} 662V745`} stroke="#3f4044" strokeWidth="1.200" />
              <AxisText x={x} y="764" textLength={w} lengthAdjust="spacingAndGlyphs">{t}</AxisText>
            </g>
          ))}
          {legend.map(([x, c, t, w]) => (
            <g key={t}>
              <rect x={x + 0.5} y="780.500" width="12" height="12" fill={c} />
              <AxisText $a="start" x={x + 20.500} y="793" textLength={w} lengthAdjust="spacingAndGlyphs">{t}</AxisText>
            </g>
          ))}
        </ChartSvg>
      </Section>
    </Panel>
  );
}

const navItems = [["Overview", 67], ["Traffic Graph", 94.5], ["Applications", 87.5], ["Workloads", 74], ["Services", 61], ["Istio Config", 82], ["Mesh", 38.5]];
const Gap = styled.i`width: ${(p) => p.$w}px; flex: none;`;

function Kiali() {
  return (
    <>
      <Header>
        <svg width="22" height="20" viewBox="0 0 22 20"><path d="M0 1.600h22M0 9.200h22M0 16.700h22" stroke="#b4b4b6" strokeWidth="3.200" /></svg>
        <Gap $w={25} />
        <svg width="44" height="32" viewBox="0 0 44 32"><circle cx="10.500" cy="16" r="10.500" fill="#0a8fe0" /><path d="M19 4q9 5 9 13t-7 12q-8-5-8-13t6-12z" fill="#0a8fe0" /><circle cx="28.500" cy="16" r="14.300" fill="none" stroke="#ccf5fd" strokeWidth="2" /></svg>
        <Wordmark><T w={54}>kiali</T></Wordmark>
        <Spacer />
        <ClusterPill><ServerIcon /><T w={71}>Kubernetes</T></ClusterPill>
        <Toggle><Sun /></Toggle>
        <Toggle $on><FaMoon size={15} color="#e6e6e6" /></Toggle>
        <Notify><FaBell size={15} /><span>1</span></Notify>
        <FaQuestionCircle size={16} color="#b0b1b4" />
        <Anon><T w={72}>anonymous</T></Anon>
      </Header>
      <Body>
        <Nav>{navItems.map(([n, w], i) => <NavItem key={n} $on={i === 1}><T w={w}>{n}</T></NavItem>)}</Nav>
        <Content>
          <Row>
            <Select $w={188}><T w={76}>Namespace:</T><Gap $w={14} /><T w={43.5}>default</T><Caret /></Select>
            <Bar />
            <Select $w={94}><T w={40}>Traffic</T><Caret /></Select>
            <Bar />
            <Select $w={152}><T w={98}>Workload graph</T><Caret /></Select>
            <Spacer />
            <Link $g={8} $mr={8}><FaHistory size={13.5} /><T w={42}>Replay</T></Link>
            <Select $w={100}><T w={46}>Last 1m</T><Caret /></Select>
            <Select $w={113}><T w={58}>Every 10s</T><Caret /></Select>
            <RefreshBtn><FaSyncAlt size={14} color="#fff" /></RefreshBtn>
          </Row>
          <Row>
            <Select $w={99} $mr={12}><T w={45}>Display</T><Caret /></Select>
            <Select $w={214} $mr={12} $pr={10} $muted><T w={38}>Find...</T><Caret /></Select>
            <Select $w={214} $mr={16} $pr={10} $muted><T w={39}>Hide...</T><Caret /></Select>
            <svg width="14" height="14" viewBox="0 0 14 14" fill="none" stroke="#0a95f5"><circle cx="7" cy="7" r="6" strokeWidth="1.700" /><path d="M7 6v4M7 3.300v1.700M5.500 10.200h3M5.700 6.400H7" strokeWidth="1.500" /></svg>
            <Spacer />
            <Link $g={5} $mr={16}><FaRegQuestionCircle size={14} /><T w={29}>Help</T></Link>
            <Link $g={5} $mr={0}>
              <svg width="14" height="14" viewBox="0 0 14 14" fill="none" stroke="currentColor" strokeWidth="1.700"><path d="M1 1v4h4M1.500 4.500A6 6 0 0 1 12.500 5M13 13V9H9M12.500 9.500A6 6 0 0 1 1.500 9" /><circle cx="7" cy="7" r="2.300" strokeWidth="1.800" strokeDasharray="1.500 .5" /></svg>
              <T w={36}>Reset</T>
            </Link>
          </Row>
          <Workspace>
            <Canvas>
              <Graph />
              <TimeRange><T w={194}>Oct 31, 04:26:39 PM ... 04:27:39 PM</T></TimeRange>
              <Tools>
                <Tool $on><Move /></Tool>
                <Tool><FaExpandArrowsAlt size={14} /></Tool>
                <Tool><FaLongArrowAltRight size={13} /></Tool>
                <Tool><FaLongArrowAltRight size={13} /></Tool>
                <Tool $on><Hub /></Tool>
                <Tool><Hub /></Tool><Tool><Hub /></Tool><Tool><Hub /></Tool>
                <Tool $w={28}><FaMap size={12} /></Tool>
              </Tools>
              <HideTab><Vertical>Hide</Vertical><svg width="11" height="10" viewBox="0 0 11 10" fill="none" stroke="#fff" strokeWidth="2"><path d="M1 1l4 4-4 4M6 1l4 4-4 4" /></svg></HideTab>
            </Canvas>
            <SidePanel />
          </Workspace>
        </Content>
      </Body>
    </>
  );
}

export default function App() {
  return (
    <Desktop>
      <Global />
      <TopBar>
        <Pills><Pill $w={29} $h={8} $c="#f5f5f5" /><Pill $w={6} $h={6} $c="#858585" /></Pills>
        <Clock><T w={85}>{"Oct 31  16:27"}</T></Clock>
        <Tray>
          <TrayIcon $w={18}><svg width="14" height="15" viewBox="0 0 14 15"><path d="M11.500 9.500A5 5 0 1 1 10.500 4" fill="none" stroke="#6fa3d8" strokeWidth="3" /><path d="M13.500 0v6.500H7.500z" fill="#6fa3d8" /></svg></TrayIcon>
          <Gap $w={31} />
          <TrayIcon $w={18}><FaSlack size={14} color="#f2f2f2" /></TrayIcon>
          <Gap $w={30} />
          <TrayIcon $w={18}><svg width="14" height="16" viewBox="0 0 14 16"><path d="M0 4l7-4 7 4-5 3v9l-3-1-6-5z" fill="#ff5a3c" /><path d="M5 1l2-1 7 4v5L6 6z" fill="#c42be0" /><path d="M0 4l6 3v8l-6-4z" fill="#ff3a6a" /><path d="M6 7l8-3v8l-7 4z" fill="#000" /><path d="M8.500 12.500l2-1" stroke="#fff" /></svg></TrayIcon>
          <Gap $w={30} />
          <TrayIcon $w={18}><svg width="16" height="12" viewBox="0 0 16 12"><path d="M0 3q8-6 16 0L8 12z" fill="#f5f5f5" /><path d="M1.500 4.500q6.500-4 13 0" stroke="#131313" strokeWidth="1" fill="none" /></svg></TrayIcon>
          <Gap $w={10} />
          <TrayIcon $w={18}><FaVolumeUp size={14} color="#f5f5f5" /></TrayIcon>
          <Gap $w={9} />
          <TrayIcon $w={18}><svg width="16" height="15" viewBox="0 0 16 15"><path d="M3.500 4L0 8.500h2L1.300 12 4.500 7H2.800z" fill="#fff" /><rect x="6.800" y="2" width="8.400" height="12" rx="1.500" fill="none" stroke="#fff" strokeWidth="1.500" /><rect x="8.700" y="4" width="4.600" height="8" fill="#fff" /><rect x="9" y="0" width="4" height="2" fill="#fff" /></svg></TrayIcon>
        </Tray>
      </TopBar>
      <Main>
        <Dock />
        <Browser>
          <Chromium />
          <Kiali />
        </Browser>
      </Main>
    </Desktop>
  );
}
